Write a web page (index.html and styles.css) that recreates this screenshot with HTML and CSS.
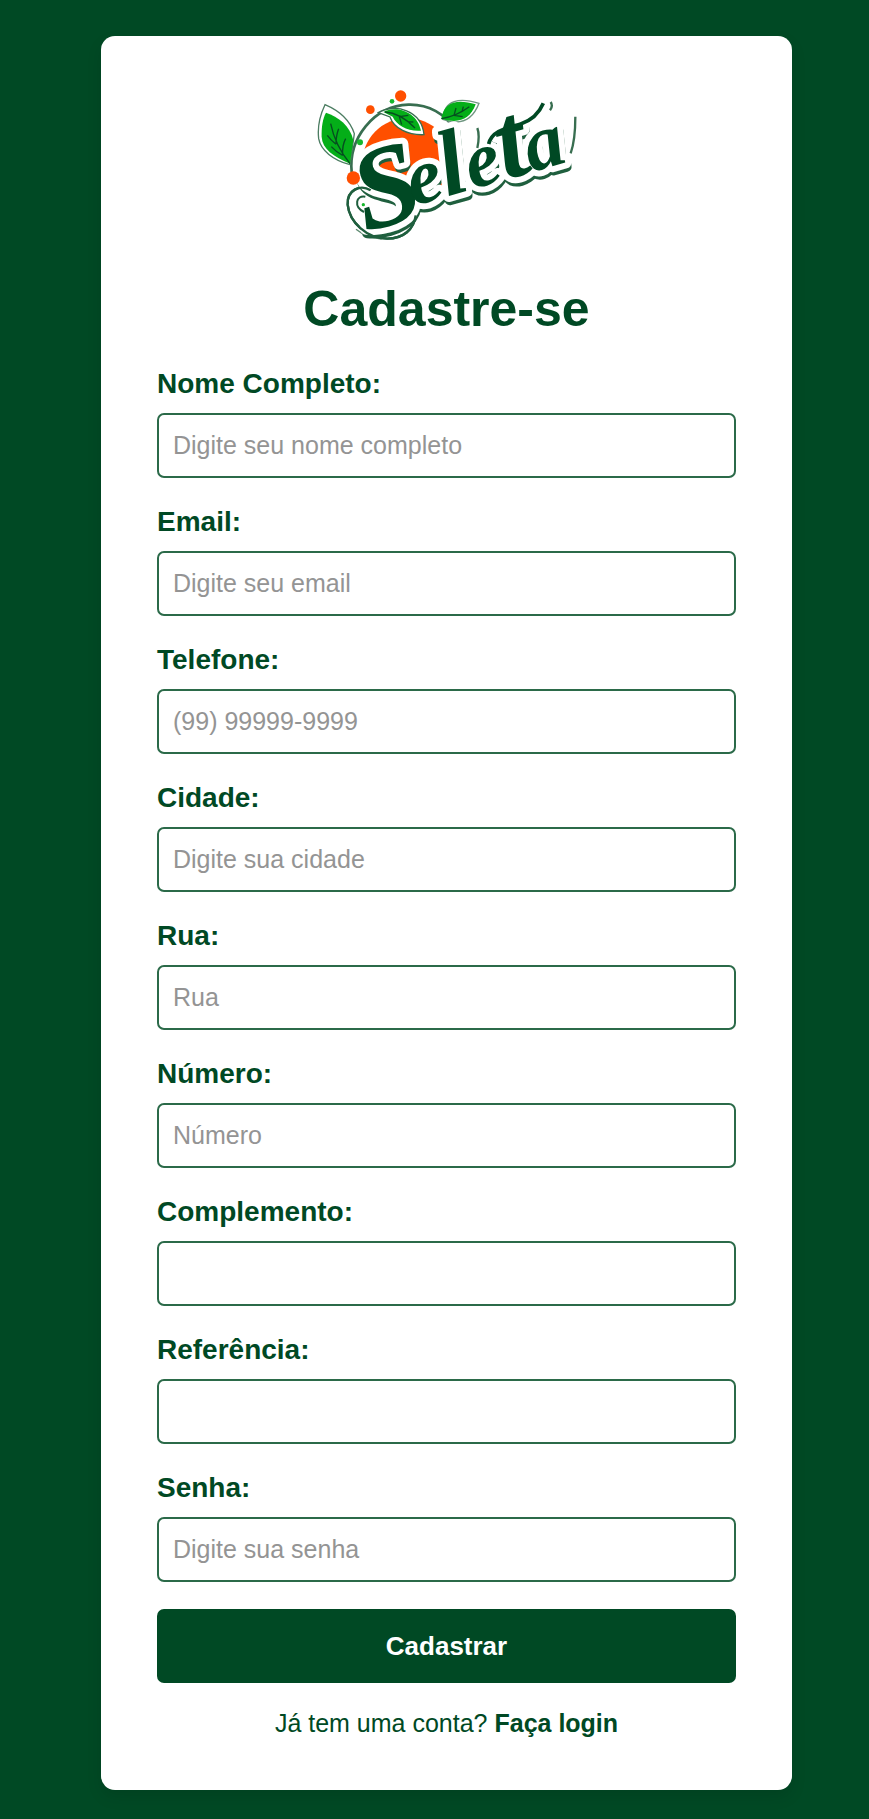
FILE: index.html
```html
<!DOCTYPE html>
<html lang="pt-BR">
<head>
<meta charset="utf-8">
<meta name="viewport" content="width=device-width, initial-scale=1">
<title>Cadastre-se</title>
<link rel="stylesheet" href="styles.css">
</head>
<body>
<main class="card">
  <svg class="logo" viewBox="51 44 780 450" role="img" aria-label="Seleta">
    <defs>
      <text id="wordmark" class="wordmark" transform="translate(196 471) rotate(-16)"><tspan class="initial">S</tspan><tspan dx="-34" dy="-36">e</tspan><tspan class="tall">l</tspan><tspan>e</tspan><tspan class="taller">t</tspan><tspan dx="-8">a</tspan></text>
    </defs>
    <circle cx="322" cy="263" r="135" fill="#ff4f00"/>
    <path d="M155 290C145 190 220 92 325 88C385 86 438 116 465 165" fill="none" stroke="#386e50" stroke-width="8"/>
    <path d="M75 88C115 105 150 135 163 175L150 268C100 255 62 225 56 190C52 155 62 115 75 88Z" fill="#fff" stroke="#4c7d62" stroke-width="4"/>
    <path d="M78 112C115 125 150 150 160 195L150 265C100 245 67 220 65 185C64 155 68 130 78 112Z" fill="#04ae18"/>
    <path d="M92 145Q105 210 150 265M108 207Q108 180 116 160M108 207Q92 194 82 180M128 240Q126 210 137 190M128 240Q110 232 94 214" fill="none" stroke="#064d20" stroke-width="4"/>
    <path d="M235 112C285 82 365 105 372 178C325 180 282 160 270 125Z" fill="#fff" stroke="#386e50" stroke-width="4"/>
    <path d="M250 110C290 88 352 110 363 166C323 169 290 150 278 124Z" fill="#04ae18"/>
    <path d="M255 110Q300 112 345 158M298 124L325 120M298 124L305 148M322 139L340 140" fill="none" stroke="#064d20" stroke-width="4"/>
    <path d="M428 132C432 72 480 66 537 84C518 134 482 152 428 132Z" fill="#fff" stroke="#6f9680" stroke-width="4"/>
    <path d="M424 130C432 80 470 70 527 87C510 134 474 146 424 130Z" fill="#04ae18"/>
    <path d="M424 130Q470 122 508 94M462 120L468 98M462 120L488 124M486 109L490 94" fill="none" stroke="#064d20" stroke-width="4"/>
    <g fill="#ff4f00"><circle cx="302" cy="62" r="17"/><circle cx="211" cy="103" r="13"/></g>
    <g fill="#16b72c"><circle cx="276" cy="78" r="7"/><circle cx="180" cy="201" r="9"/><circle cx="460" cy="186" r="6"/></g>
    <path d="M212 345C180 325 140 345 143 388C148 440 200 490 262 490C310 490 342 462 347 420L300 350Z" fill="#fff" stroke="#1f5f3e" stroke-width="7"/>
    <path d="M168 462Q200 488 245 491" fill="none" stroke="#5d8a70" stroke-width="4"/>
    <use href="#wordmark" class="wordmark-shadow" x="3" y="12"/>
    <use href="#wordmark" class="wordmark-edge"/>
    <path d="M212 345C180 325 140 345 143 388C148 440 200 490 262 490C310 490 342 462 347 420" fill="none" stroke="#1f5f3e" stroke-width="7"/>
    <path d="M192 410C160 395 168 358 196 364" fill="none" stroke="#1f5f3e" stroke-width="6"/>
    <use href="#wordmark" fill="#004924"/>
    <path d="M566 206C575 165 622 158 662 146C696 135 718 112 730 84" fill="none" stroke="#004924" stroke-width="11"/>
    <path d="M752 80Q760 92 750 105M532 158Q540 180 532 218M826 124C826 170 822 205 812 234" fill="none" stroke="#386e50" stroke-width="7"/>
    <circle cx="190" cy="388" r="5" fill="#16b72c"/>
    <circle cx="160" cy="308" r="20" fill="#ff4f00"/>
  </svg>
  <h1 class="title">Cadastre-se</h1>
  <form class="form">
    <div class="field"><label for="nome">Nome Completo:</label><input id="nome" type="text" placeholder="Digite seu nome completo"></div>
    <div class="field"><label for="email">Email:</label><input id="email" type="email" placeholder="Digite seu email"></div>
    <div class="field"><label for="telefone">Telefone:</label><input id="telefone" type="tel" placeholder="(99) 99999-9999"></div>
    <div class="field"><label for="cidade">Cidade:</label><input id="cidade" type="text" placeholder="Digite sua cidade"></div>
    <div class="field"><label for="rua">Rua:</label><input id="rua" type="text" placeholder="Rua"></div>
    <div class="field"><label for="numero">Número:</label><input id="numero" type="text" placeholder="Número"></div>
    <div class="field"><label for="complemento">Complemento:</label><input id="complemento" type="text"></div>
    <div class="field"><label for="referencia">Referência:</label><input id="referencia" type="text"></div>
    <div class="field"><label for="senha">Senha:</label><input id="senha" type="password" placeholder="Digite sua senha"></div>
    <button class="submit" type="submit">Cadastrar</button>
  </form>
  <p class="login">Já tem uma conta? <a href="#login">Faça login</a></p>
</main>
</body>
</html>
```
FILE: styles.css
```css
* { box-sizing: border-box; }

body {
  margin: 0;
  padding: 36px 77px 28px 101px;
  background: #004924;
  color: #004924;
  font-family: "Liberation Sans", Arial, sans-serif;
}

.card {
  padding: 54px 56px 52px;
  background: #fff;
  border-radius: 14px;
  box-shadow: 0 7px 15px rgba(0, 0, 0, 0.1);
}

.logo {
  display: block;
  width: 260px;
  height: 150px;
  margin: 0 auto;
}

.wordmark {
  font: italic bold 235px "Liberation Serif", serif;
}

.initial { font-size: 350px; }

.tall { font-size: 280px; }

.taller { font-size: 320px; }

.wordmark-shadow {
  fill: #1f5f3e;
  stroke: #1f5f3e;
  stroke-width: 32px;
  stroke-linejoin: round;
}

.wordmark-edge {
  fill: #fff;
  stroke: #fff;
  stroke-width: 36px;
  stroke-linejoin: round;
}

.title {
  margin: 41px 0 30px;
  font-size: 50px;
  line-height: 56px;
  text-align: center;
}

.form {
  display: flex;
  flex-direction: column;
  gap: 27px;
}

.field {
  display: flex;
  flex-direction: column;
  gap: 12px;
}

.field label {
  font-size: 28px;
  font-weight: bold;
  line-height: 34px;
}

.field input {
  width: 100%;
  height: 65px;
  padding: 0 14px;
  border: 2px solid #2b6a49;
  border-radius: 7px;
  background: #fff;
  color: #004924;
  font: 25px "Liberation Sans", Arial, sans-serif;
}

.field input::placeholder { color: #949494; opacity: 1; }

.submit {
  height: 74px;
  border: 0;
  border-radius: 7px;
  background: #004924;
  color: #fff;
  font: bold 26px "Liberation Sans", Arial, sans-serif;
}

.login {
  margin: 25px 0 0;
  font-size: 25px;
  line-height: 30px;
  text-align: center;
}

.login a {
  color: inherit;
  font-weight: bold;
  text-decoration: none;
}
```
